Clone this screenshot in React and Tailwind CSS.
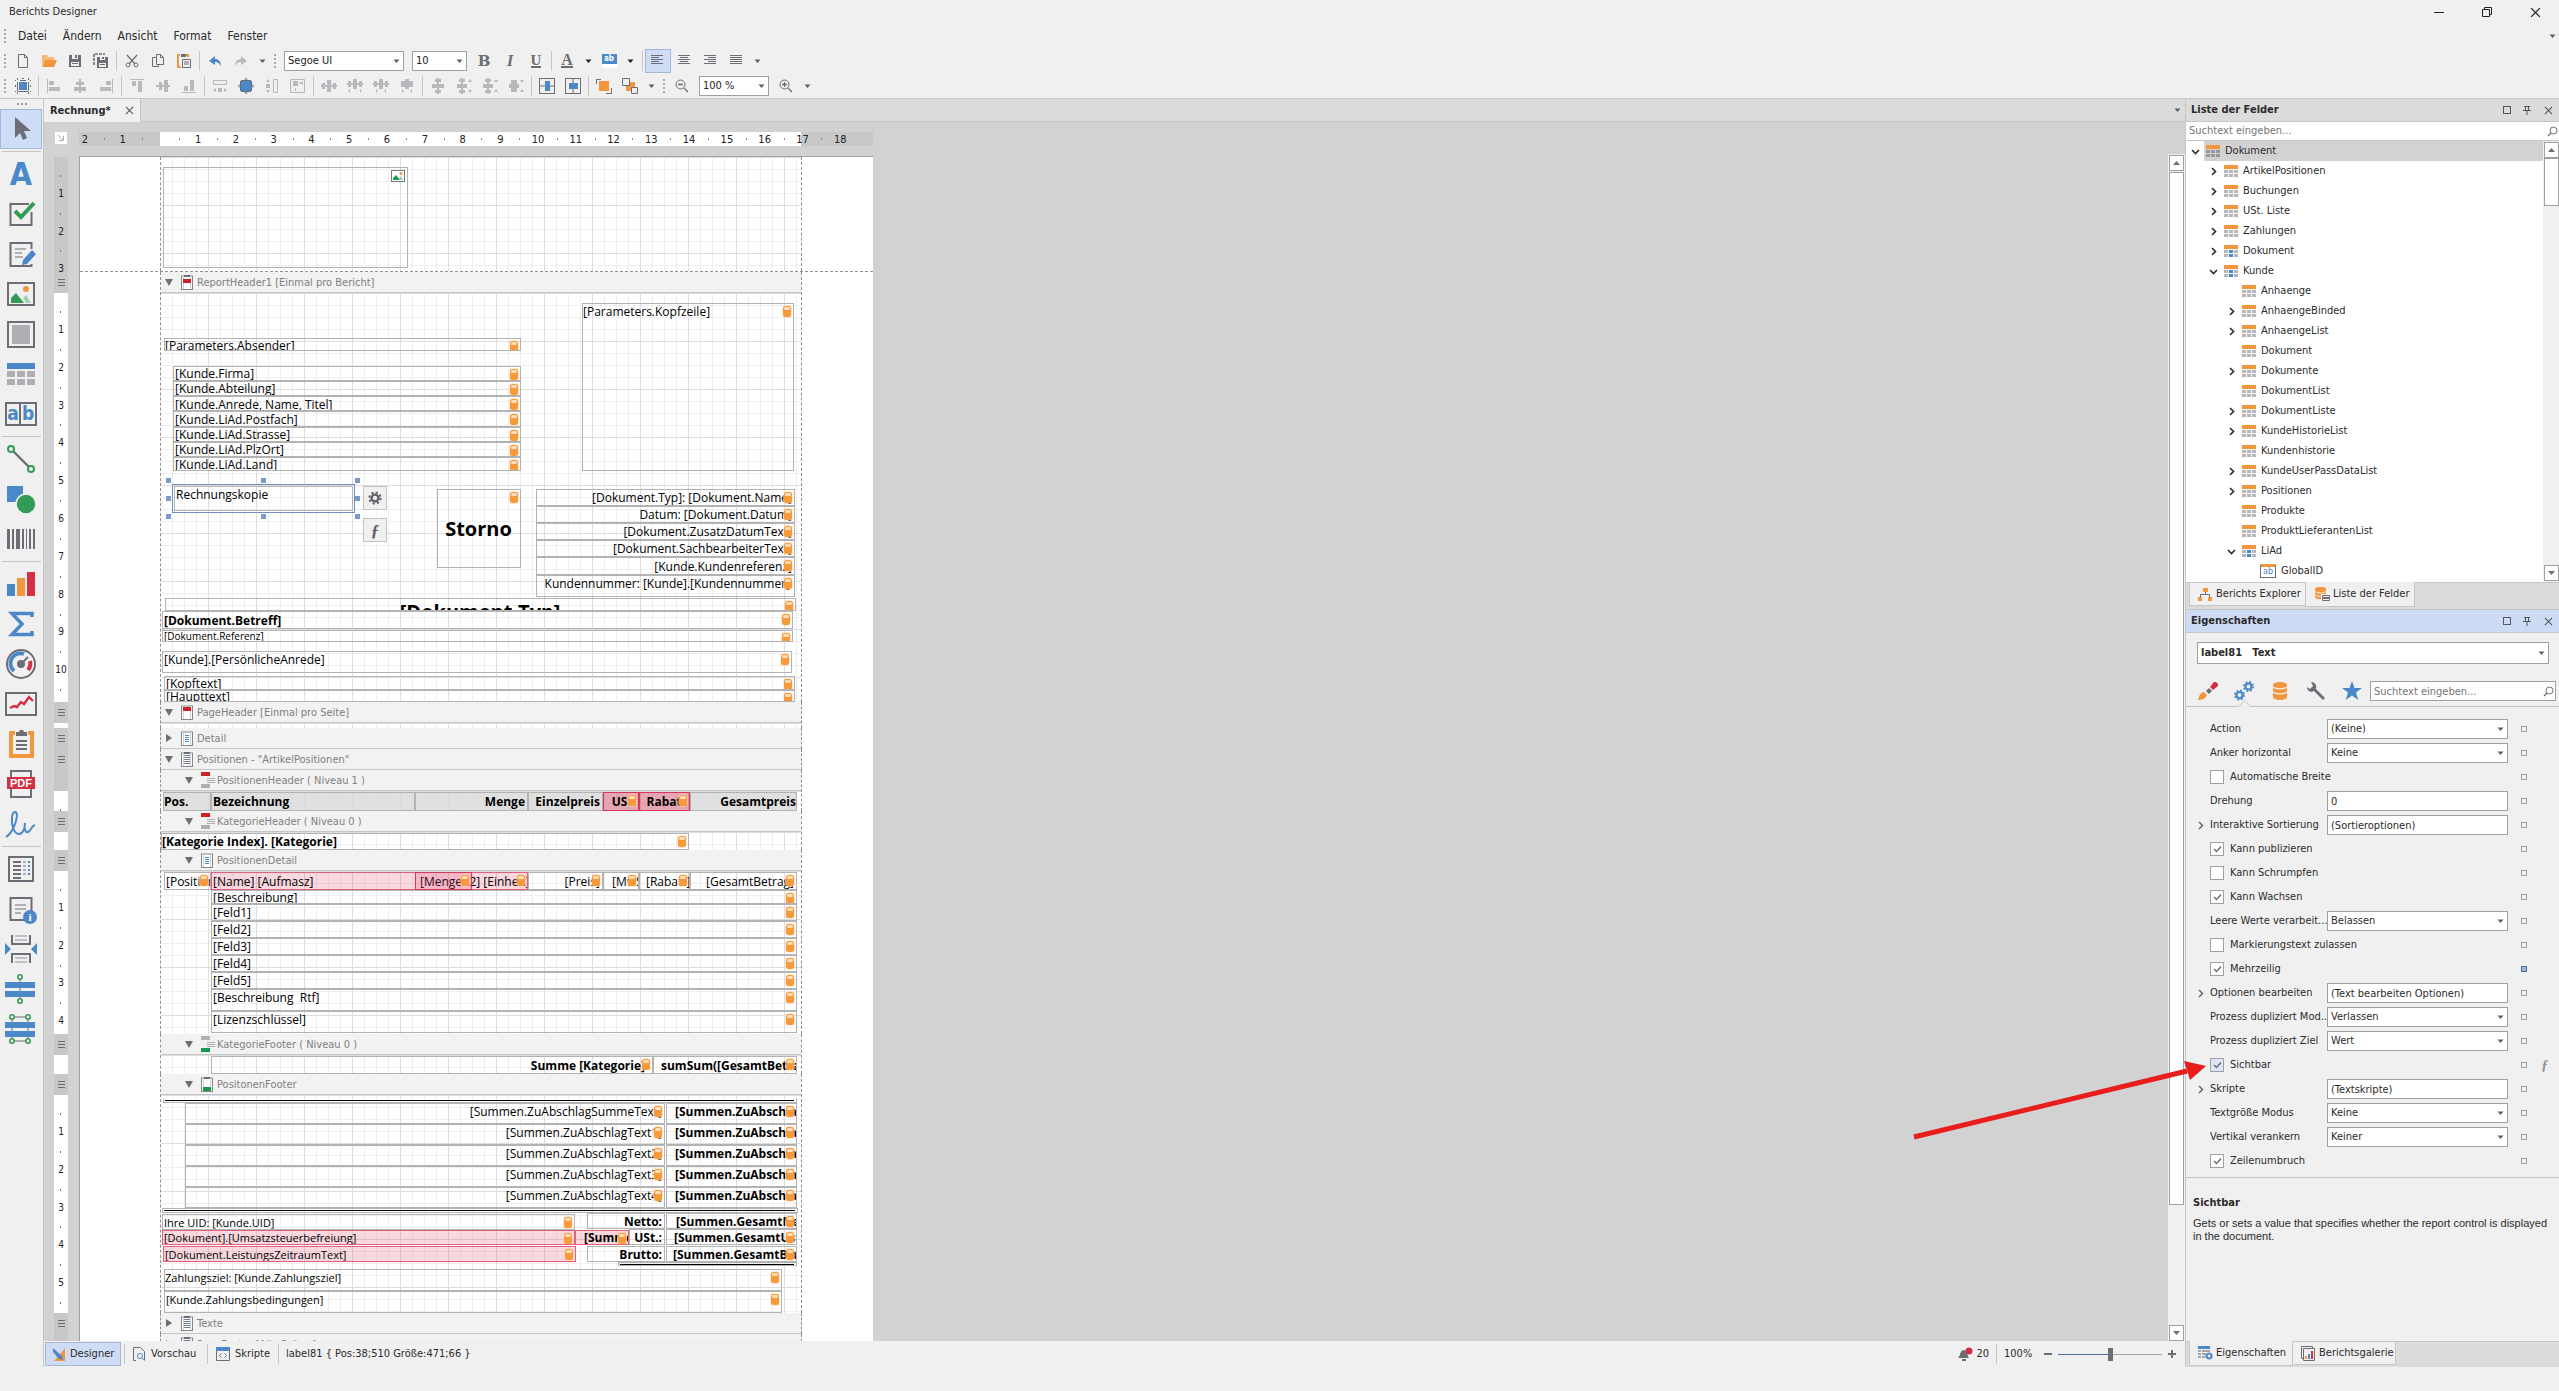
import { Fragment } from "react";

const CM = 37.8;
const GREY = "#6d6d75";
const MUTED = "#b9b9bd";
const BLUE = "#4a88c7";
const ORANGE = "#f3963e";
const GREEN = "#349b57";
const RED = "#d32f45";

// ---------- small shared pieces ----------

const Svg = ({ w = 16, h = 16, box, children, className = "" }) => (
    <svg width={w} height={h} viewBox={box || `0 0 ${w} ${h}`} fill="none" className={`shrink-0 ${className}`} aria-hidden="true">
        {children}
    </svg>
)

const Caret = ({ color = "#5f5f66" }) => (
    <Svg w={7} h={4}><path d="M0.5 0.5h6L3.5 4z" fill={color} /></Svg>
)

const Chevron = ({ open, color = "#2b2b2b" }) => (
    <Svg w={9} h={9}>
        <path d={open ? "M1 3l3.5 3.5L8 3" : "M3 1l3.5 3.5L3 8"} stroke={color} strokeWidth="1.6" />
    </Svg>
)

const Cross = ({ size = 9, color = "#55555b" }) => (
    <Svg w={size} h={size} box="0 0 10 10"><path d="M1 1l8 8M9 1L1 9" stroke={color} strokeWidth="1.2" /></Svg>
)

const Magnifier = () => (
    <Svg w={11} h={11}><circle cx="6.5" cy="4.5" r="3.5" stroke="#707078" /><path d="M4 7L1 10" stroke="#707078" strokeWidth="1.4" /></Svg>
)

const Grip = () => (
    <span className="flex w-[10px] shrink-0 flex-col items-center gap-[2px]">
        {[0, 1, 2, 3].map(i => <i key={i} className="size-[2px] bg-[#a9a9ad]" />)}
    </span>
)

const Sep = () => <span className="mx-[2px] h-5 w-px shrink-0 bg-[#c6c6c6]" />

const DbMark = () => (
    <Svg w={10} h={13} className="absolute top-px right-px">
        <rect x="0" y="0" width="10" height="13" rx="3" fill="#fdd9b5" fillOpacity="0.5" />
        <rect x="1" y="1" width="8" height="11" rx="2.5" fill="#f99a3a" />
        <rect x="2" y="2" width="6" height="3" rx="1.5" fill="#fde0c0" />
    </Svg>
)

const TableIcon = ({ blue, dark }) => (
    <Svg w={14} h={12}>
        <rect width="14" height="4" fill={ORANGE} />
        {[5, 9].map(y => [0, 5, 10].map(x => (
            <rect key={x + "-" + y} x={x} y={y} width="4" height="3" fill={blue && x === 5 ? BLUE : dark ? "#97979b" : "#b6b6ba"} />
        )))}
    </Svg>
)

const Select = ({ label, value, className = "", caret = "#5f5f66" }) => (
    <span className={`relative flex items-center ${className}`}>
        <select aria-label={label} defaultValue={value} className="h-full w-full appearance-none border border-[#a0a0a0] bg-white pr-4 pl-[3px] text-[#222]">
            <option>{value}</option>
        </select>
        <span className="pointer-events-none absolute right-1"><Caret color={caret} /></span>
    </span>
)

// ---------- toolbars ----------

const AlignIcon = ({ rows }) => (
    <Svg w={14} h={12}>
        {rows.map(([x, w], i) => <rect key={i} x={x} y={i * 2} width={w} height="1" fill={GREY} />)}
    </Svg>
)

const Bars = ({ d, extra, color = MUTED }) => (
    <Svg>
        <path d={d} fill={color} />
        {extra && <path d={extra} stroke={color} />}
    </Svg>
)

const fileTools = [
    ["Neu", <Svg><path d="M3.5 1.5h6l3 3v10h-9zM9.5 1.5v3h3" stroke={GREY} /></Svg>],
    ["Öffnen", <Svg><path d="M1 13V2h5l1 2h6v3H4z" fill="#f8b878" /><path d="M4 7h12l-3 7H1z" fill={ORANGE} /></Svg>],
    ["Speichern", <Svg><path d="M2 2h12v12H2z" fill={GREY} /><path d="M5 2h6v4H5zM4 9h8v4H4z" fill="#f0f0f0" /><path d="M8 2h2v3H8zM5 10h6v1H5z" fill={GREY} /></Svg>],
    ["Alle speichern", <Svg><path d="M1 12V1h11" stroke={GREY} strokeWidth="1.6" strokeDasharray="3 1" /><path d="M4 4h11v11H4z" fill={GREY} /><path d="M7 4h5v3H7zM6 10h7v4H6z" fill="#f0f0f0" /><path d="M9 4h2v2H9zM7 11h5v1H7z" fill={GREY} /></Svg>],
    null,
    ["Ausschneiden", <Svg><path d="M3 2l8 9M13 2L5 11" stroke={GREY} strokeWidth="1.3" /><circle cx="4" cy="12" r="2" stroke={GREY} /><circle cx="12" cy="12" r="2" stroke={GREY} /></Svg>],
    ["Kopieren", <Svg><path d="M6.5 1.5h4l3 3v7h-7z" stroke={GREY} /><path d="M6 4.5H2.500v9h6V12" stroke={GREY} /><path d="M10.500 1.500v3h3" stroke={GREY} /></Svg>],
    ["Einfügen", <Svg><path d="M5 14H2V2h2M10 2h2v2" stroke={ORANGE} strokeWidth="2" /><path d="M5 1h5v3H5z" fill={GREY} /><path d="M6.500 6.500h8v8h-8zM8 9h5M8 11h5" stroke={GREY} /></Svg>],
    null,
    ["Rückgängig", <Svg><path d="M2 8l6-5v3c4 0 6 3 6 7-2-3-3-4-6-4v3z" fill={BLUE} /></Svg>],
    ["Wiederholen", <Svg><path d="M14 8L8 3v3c-4 0-6 3-6 7 2-3 3-4 6-4v3z" fill={MUTED} /></Svg>],
]

const Lit = ({ children }) => (
    <Svg>
        <rect x="3" y="3" width="10" height="10" fill={BLUE} />
        {children}
    </Svg>
)

const layoutTools = [
    ["Am Raster ausrichten", <Svg><path d="M2.500 0v2M13.500 0v2M2.500 14v2M13.500 14v2M2.500 4v9M13.500 4v9M5 2.500h6M3 13.500h10M0 2.500h1M15 2.500h1M0 13.500h1M15 13.500h1" stroke={GREY} /><rect x="4" y="4" width="8" height="8" fill={BLUE} /><path d="M7 0h2v1H7zM0 7h1v2H0zM15 7h1v2h-1z" fill={GREY} /></Svg>],
    null,
    ["Links", <Bars d="M1 1h1v14H1zM3 3h5v4H3zM3 9h11v4H3z" />],
    ["Zentriert", <Bars d="M7 1h2v14H7zM4 4h8v3H4zM2 9h12v4H2z" />],
    ["Rechts", <Bars d="M14 1h1v14h-1zM8 3h5v4H8zM2 9h11v4H2z" />],
    null,
    ["Oben", <Bars d="M1 1h14v1H1zM3 3h4v5H3zM9 3h4v11H9z" />],
    ["Mitte", <Bars d="M1 7h14v2H1zM4 4h3v8H4zM9 2h4v12H9z" />],
    ["Unten", <Bars d="M1 14h14v1H1zM3 8h4v5H3zM9 2h4v11H9z" />],
    null,
    ["Gleiche Breite", <Bars d="M6 10h4v4H6zM1 12l3-2v4zM15 12l-3-2v4z" extra="M1.500 2.500h13v4h-13z" />],
    ["An Raster anpassen", <Lit><path d="M2.500 3v10M13.500 3v10M3 2.500h10M3 13.500h10" stroke={GREY} /><path d="M8 0l2 1.500H6zM8 16l2-1.500H6zM0 8l1.500-2v4zM16 8l-1.500-2v4z" fill={GREY} /></Lit>],
    ["Gleiche Höhe", <Bars d="M2 6h4v4H2zM4 1l2 3H2zM4 15l2-3H2z" extra="M9.500 1.500h4v13h-4z" />],
    ["Gleiche Größe", <Bars d="M3 3h5v5H3zM10 5l3-2v4zM5 10h1v3H5z" extra="M.5 1.500h14v13H.5zM9 5h3" />],
    null,
    ["Abstand h", <Bars d="M0 7h16v2H0zM1 5h3v6H1zM6 2h4v12H6zM12 5h3v6h-3z" />],
    ["Abstand h +", <Bars d="M0 5h16v2H0zM1 3h3v6H1zM6 1h4v10H6zM12 3h3v6h-3zM1 13l2-2v4zM15 13l-2-2v4z" />],
    ["Abstand h -", <Bars d="M0 5h16v2H0zM1 3h3v6H1zM6 1h4v10H6zM12 3h3v6h-3zM5 13l-2-2v4zM11 13l2-2v4z" />],
    ["Abstand h 0", <Bars d="M2 3h4v6H2zM6 1h4v10H6zM10 3h4v6h-4zM5 13l-2-2v4zM11 13l2-2v4z" />],
    null,
    ["Abstand v", <Bars d="M7 0h2v16H7zM5 1h6v3H5zM2 6h12v4H2zM5 12h6v3H5z" />],
    ["Abstand v +", <Bars d="M5 0h2v16H5zM3 1h6v3H3zM1 6h10v4H1zM3 12h6v3H3zM14 1l2 3h-4zM14 15l2-3h-4z" />],
    ["Abstand v -", <Bars d="M5 0h2v16H5zM3 1h6v3H3zM1 6h10v4H1zM3 12h6v3H3zM14 5l2-3h-4zM14 11l2 3h-4z" />],
    ["Abstand v 0", <Bars d="M3 2h6v4H3zM1 6h10v4H1zM3 10h6v4H3zM14 5l2-3h-4zM14 11l2 3h-4z" />],
    null,
    ["Horizontal zentrieren", <Svg><rect x="0.5" y="0.500" width="15" height="15" stroke={GREY} /><path d="M1 8h14" stroke={GREY} /><rect x="6" y="3" width="5" height="10" fill={BLUE} /></Svg>],
    ["Vertikal zentrieren", <Svg><rect x="0.5" y="0.500" width="15" height="15" stroke={GREY} /><path d="M8 1v14" stroke={GREY} /><rect x="4" y="5" width="9" height="6" fill={BLUE} /></Svg>],
    null,
    ["In den Vordergrund", <Svg><path d="M5 1.500H.5V6M10 15.500h5.500V10" stroke={GREY} /><rect x="3" y="3" width="10" height="10" fill={ORANGE} /></Svg>],
    ["In den Hintergrund", <Svg><rect x="4" y="4" width="9" height="9" fill={ORANGE} /><path d="M.5.5h7v7h-7zM9.500 9.500h6v6h-6z" stroke={GREY} fill="#f0f0f0" /></Svg>],
]

const ToolButton = ({ label, active, children }) => (
    <button aria-label={label} className={`flex h-6 w-[26px] shrink-0 items-center justify-center ${active ? "border border-[#a5b6d6] bg-[#cfdcf5]" : ""}`}>
        {children}
    </button>
)

const Tools = ({ items }) => items.map((t, i) => t
    ? <ToolButton key={i} label={t[0]}>{t[1]}</ToolButton>
    : <Sep key={i} />
)

const Drop = ({ color }) => (
    <button aria-label="Mehr" className="flex h-6 w-4 shrink-0 items-center justify-center"><Caret color={color} /></button>
)

const TopBars = () => (
    <header>
        <div className="flex h-6 items-center pl-[9px]">
            <h1>Berichts Designer</h1>
            <div className="ml-auto flex">
                <button aria-label="Minimieren" className="flex h-6 w-12 items-center justify-center"><Svg w={10} h={10}><path d="M0 5.500h10" stroke="#222" /></Svg></button>
                <button aria-label="Wiederherstellen" className="flex h-6 w-12 items-center justify-center"><Svg w={10} h={10}><path d="M.5 2.500h7v7h-7zM2.500 2V.5h7v7H8" stroke="#222" /></Svg></button>
                <button aria-label="Schließen" className="flex h-6 w-12 items-center justify-center"><Cross size={11} color="#222" /></button>
            </div>
        </div>
        <nav className="flex h-6 items-center text-[12px]">
            <Grip />
            {["Datei", "Ändern", "Ansicht", "Format", "Fenster"].map(m => (
                <button key={m} className="px-2">{m}</button>
            ))}
            <span className="mr-[3px] ml-auto"><Caret /></span>
        </nav>
        <div className="flex h-[25px] items-center">
            <Grip />
            <Tools items={fileTools} />
            <Drop />
            <Grip />
            <Select label="Schriftart" value="Segoe UI" className="ml-1 h-5 w-[120px]" />
            <Select label="Schriftgröße" value="10" className="mr-1 ml-2 h-5 w-[55px]" />
            <ToolButton label="Fett"><b className="font-['DejaVu_Serif','Liberation_Serif',serif] text-[15px] text-[#6d6d75]">B</b></ToolButton>
            <ToolButton label="Kursiv"><b className="font-['Liberation_Serif',serif] text-[17px] text-[#6d6d75] italic">I</b></ToolButton>
            <ToolButton label="Unterstrichen"><b className="border-b-2 border-[#6d6d75] font-['Liberation_Serif',serif] text-[15px] leading-3 text-[#6d6d75]">U</b></ToolButton>
            <Sep />
            <ToolButton label="Schriftfarbe"><b className="border-b-2 border-[#6d6d75] font-['Liberation_Serif',serif] text-[16px] leading-3 text-[#6d6d75]">A</b></ToolButton>
            <Drop color="#222" />
            <ToolButton label="Hintergrundfarbe">
                <span className="flex h-[14px] w-[15px] flex-col border-b-4 border-white bg-[#4a88c7] text-center text-[8px] leading-[10px] font-bold text-white">ab</span>
            </ToolButton>
            <Drop color="#222" />
            <span className="w-[2px]" />
            <Sep />
            <ToolButton label="Linksbündig" active><AlignIcon rows={[[0, 12], [0, 8], [0, 12], [0, 8], [0, 12]]} /></ToolButton>
            <ToolButton label="Zentriert"><AlignIcon rows={[[1, 12], [3, 8], [1, 12], [3, 8], [1, 12]]} /></ToolButton>
            <ToolButton label="Rechtsbündig"><AlignIcon rows={[[1, 12], [5, 8], [1, 12], [5, 8], [1, 12]]} /></ToolButton>
            <ToolButton label="Blocksatz"><AlignIcon rows={[[1, 12], [1, 12], [1, 12], [1, 12], [1, 12]]} /></ToolButton>
            <Drop />
        </div>
        <div className="flex h-[25px] items-center">
            <Grip />
            <Tools items={layoutTools} />
            <Drop />
            <Grip />
            <ToolButton label="Verkleinern"><Svg w={14} h={14}><circle cx="5.500" cy="5.500" r="4.500" stroke={GREY} /><path d="M3 5.500h5M9 9l4 4" stroke={GREY} strokeWidth="1.3" /></Svg></ToolButton>
            <Select label="Zoom" value="100 %" className="mx-1 h-5 w-[70px]" />
            <ToolButton label="Vergrößern"><Svg w={14} h={14}><circle cx="5.500" cy="5.500" r="4.500" stroke={GREY} /><path d="M3 5.500h5M5.500 3v5M9 9l4 4" stroke={GREY} strokeWidth="1.3" /></Svg></ToolButton>
            <Drop />
        </div>
    </header>
)

// ---------- toolbox ----------

const Big = ({ children }) => <Svg w={32} h={32}>{children}</Svg>
const page = "M5.500 5h21v22h-21z"

const toolbox = [
    ["Zeiger", <Big><path d="M10 4v21l5-5 3 7 4-2-3-7h7z" fill={GREY} /></Big>],
    null,
    ["Beschriftung", <b className="text-[32px] leading-none text-[#4a88c7]">A</b>],
    ["Kontrollkästchen", <Big><path d="M24 6H5.500v21h21V14" stroke={GREY} strokeWidth="2" /><path d="M10 13l6 6L29 5" stroke={GREEN} strokeWidth="4" /></Big>],
    ["Rich-Text", <Big><path d="M26.500 11V5h-21v23h21v-2" stroke={GREY} strokeWidth="2" /><path d="M10 11h11M10 15h7M10 19h8" stroke="#b0b0b4" strokeWidth="2" /><path d="M17 27l1-5 9-10 4 4-9 10z" fill={BLUE} /></Big>],
    ["Bild", <Big><rect x="3" y="5" width="26" height="22" stroke={GREY} strokeWidth="2" /><path d="M6 25v-5l5-5 8 10z" fill={GREEN} /><path d="M18 20l3-3 5 8h-5z" fill="#a5d0b4" /><circle cx="21" cy="11" r="3" fill={ORANGE} /></Big>],
    ["Panel", <Big><rect x="3" y="4" width="26" height="25" stroke={GREY} strokeWidth="2" /><rect x="7" y="7" width="18" height="19" fill="#aeaeb3" /></Big>],
    ["Tabelle", <Big><path d="M2 5h28v6H2z" fill={BLUE} />{[13, 21].map(y => [2, 12, 22].map(x => <rect key={x + "." + y} x={x} y={y} width="8" height="6" fill="#aeaeb3" />))}</Big>],
    ["Zeichenkamm", <span className="flex h-6 w-8 border-2 border-[#6d6d75] text-[19px] leading-[19px] font-bold text-[#4a88c7]"><i className="w-1/2 border-r-2 border-[#6d6d75] text-center not-italic">a</i><i className="w-1/2 text-center not-italic">b</i></span>],
    null,
    ["Linie", <Big><path d="M6 6l20 20" stroke={GREY} strokeWidth="2.400" /><circle cx="6" cy="6" r="3" fill="#f0f0f0" stroke={GREEN} strokeWidth="2" /><circle cx="26" cy="26" r="3" fill="#f0f0f0" stroke={GREEN} strokeWidth="2" /></Big>],
    ["Form", <Big><rect x="2" y="3" width="16" height="16" fill={BLUE} /><circle cx="21" cy="21" r="10" fill={GREEN} stroke="#f0f0f0" strokeWidth="1.500" /></Big>],
    ["Barcode", <Big><path d="M2 6h3v20H2zM7 6h2v20H7zM11 6h4v20h-4zM17 6h2v20h-2zM21 6h1v20h-1zM24 6h2v20h-2zM28 6h2v20h-2z" fill={GREY} /></Big>],
    null,
    ["Diagramm", <Big><rect x="2" y="16" width="8" height="12" fill={BLUE} /><rect x="12" y="10" width="8" height="18" fill={ORANGE} /><rect x="22" y="4" width="8" height="24" fill={RED} /></Big>],
    ["Summe", <Big><path d="M27 9V5.500H7L17 16 7 26.500h20V23" stroke={BLUE} strokeWidth="3.500" /></Big>],
    ["Messgerät", <Big><circle cx="16" cy="16" r="14" stroke={GREY} strokeWidth="2" /><path d="M9 23a10 10 0 0 1 10-17" stroke={BLUE} strokeWidth="4" /><path d="M25 13a10 10 0 0 1-2 9" stroke={RED} strokeWidth="4" /><circle cx="16" cy="16" r="4" fill={GREY} /><path d="M16 16l7-7" stroke={GREY} strokeWidth="2" /></Big>],
    ["Sparkline", <Big><rect x="1" y="5" width="30" height="22" stroke={GREY} strokeWidth="2" /><path d="M5 20l4-2 3 1 4-5 3 2 5-7 4 4" stroke={RED} strokeWidth="2.400" /></Big>],
    ["Unterbericht", <Big><path d="M10 5H6v23h21V5h-4" stroke={ORANGE} strokeWidth="4" /><path d="M11 8V4h3l1-2h3l1 2h3v4zM11 12h11v2H11zM11 16h11v2H11zM11 20h11v2H11z" fill={GREY} /></Big>],
    ["PDF", <Big><path d="M6 3h20v26H6z" stroke={GREY} strokeWidth="2" /><rect x="2" y="9" width="28" height="12" fill={RED} /><text x="16" y="19" textAnchor="middle" fontSize="11" fontWeight="bold" fill="#fff" fontFamily="Liberation Sans">PDF</text></Big>],
    ["Signatur", <Big><path d="M1 29c5-3 10-12 11-21 0-5-4-6-5 1-1 8 2 17 7 17 4 0 6-6 6-11-1 5 0 10 3 9s3-6 7-7" stroke={BLUE} strokeWidth="2" /></Big>],
    null,
    ["Inhaltsverzeichnis", <Big><path d="M4 4h24v24H4z" stroke={GREY} strokeWidth="2" /><path d="M8 9h8M8 13h8M8 17h8M8 21h8M8 25h8" stroke={GREY} strokeWidth="2" /><path d="M18 9h3M18 13h3M18 17h3M18 21h3" stroke="#b0b0b4" strokeWidth="2" /><path d="M23 9h2M23 13h2M23 17h2M23 21h2" stroke={BLUE} strokeWidth="2" /></Big>],
    ["Seiteninfo", <Big><path d={page} stroke={GREY} strokeWidth="2" /><path d="M10 12h11M10 16h11M10 20h6" stroke="#b0b0b4" strokeWidth="2" /><circle cx="25" cy="24" r="7" fill={BLUE} /><text x="25" y="28" textAnchor="middle" fontSize="11" fontWeight="bold" fill="#fff" fontFamily="Liberation Serif">i</text></Big>],
    ["Seitenumbruch", <Big><path d="M7 2v9h18V2M7 30v-9h18v9" stroke={GREY} strokeWidth="2" /><path d="M10 3h12M10 7h12M10 25h12M10 29h12" stroke="#b0b0b4" strokeWidth="1.500" /><path d="M0 10l6 6-6 6zM32 10l-6 6 6 6z" fill={BLUE} /></Big>],
    ["Bandlinie", <Big><path d="M15 4v24" stroke={GREY} /><path d="M0 9h30v6H0zM0 18h30v6H0z" fill={BLUE} /><circle cx="15" cy="4" r="2.200" fill="#f0f0f0" stroke={GREEN} strokeWidth="1.600" /><circle cx="15" cy="28" r="2.200" fill="#f0f0f0" stroke={GREEN} strokeWidth="1.600" /></Big>],
    ["Bandfeld", <Big><path d="M7 4h16v24H7z" stroke={GREY} /><path d="M0 9h30v6H0zM0 18h30v6H0z" fill={BLUE} />{[[7, 4], [23, 4], [7, 28], [23, 28]].map(([x, y]) => <circle key={x + "." + y} cx={x} cy={y} r="2.200" fill="#f0f0f0" stroke={GREEN} strokeWidth="1.600" />)}</Big>],
]

const Toolbox = () => (
    <aside className="flex w-11 shrink-0 flex-col border-r border-[#c6c6c6]">
        <span className="flex h-[10px] shrink-0 items-center justify-center gap-[2px]">
            {[0, 1, 2].map(i => <i key={i} className="size-[2px] bg-[#98989c]" />)}
        </span>
        {toolbox.map((t, i) => t
            ? <button key={i} aria-label={t[0]} className={`flex h-10 w-[42px] shrink-0 items-center justify-center ${i === 0 ? "border border-[#a5b6d6] bg-[#cfdcf5]" : ""}`}>{t[1]}</button>
            : <span key={i} className="mx-[2px] my-[2px] h-px shrink-0 bg-[#c6c6c6]" />
        )}
    </aside>
)

// ---------- report bands ----------

const T = (x, y, w, h, text, o = {}) => ({ x, y, w, h, text, db: true, ...o })

const bold = { cls: "font-bold" }
const right = { cls: "justify-end" }
const head = "bg-[#d8d8d8]/80 font-bold"
const pinkCell = "border-[#e2607e] bg-[#e03a62]/20"

const reportHeader = [
    T(421, 10, 212, 168, "[Parameters.Kopfzeile]", { cls: "items-start!", flush: true }),
    T(3, 45, 357, 13, "[Parameters.Absender]", { flush: true, low: true }),
    T(12, 73, 348, 15, "[Kunde.Firma]"),
    T(12, 88, 348, 15, "[Kunde.Abteilung]"),
    T(12, 103, 348, 15, "[Kunde.Anrede, Name, Titel]", { low: true }),
    T(12, 118, 348, 16, "[Kunde.LiAd.Postfach]"),
    T(12, 134, 348, 15, "[Kunde.LiAd.Strasse]"),
    T(12, 149, 348, 15, "[Kunde.LiAd.PlzOrt]"),
    T(12, 164, 348, 14, "[Kunde.LiAd.Land]", { low: true }),
    T(276, 196, 84, 79, "Storno", { cls: "justify-center text-[20px] font-bold" }),
    T(375, 196, 259, 17, "[Dokument.Typ]: [Dokument.Name]", right),
    T(375, 213, 259, 17, "Datum: [Dokument.Datum]", right),
    T(375, 230, 259, 17, "[Dokument.ZusatzDatumText]", right),
    T(375, 247, 259, 17, "[Dokument.SachbearbeiterText]", right),
    T(375, 264, 259, 18, "[Kunde.Kundenreferenz]", right),
    T(375, 282, 259, 22, "Kundennummer: [Kunde].[Kundennummer]", { cls: "justify-end items-start!", padR: 4 }),
    T(4, 305, 631, 13, "[Dokument.Typ]", { cls: "items-start! justify-center text-[20px] font-bold leading-[26px]" }),
    T(1, 318, 631, 18, "[Dokument.Betreff]", bold),
    T(1, 337, 631, 12, "[Dokument.Referenz]", { cls: "text-[10px]" }),
    T(1, 358, 630, 22, "[Kunde].[PersönlicheAnrede]", { cls: "items-start!" }),
    T(3, 383, 631, 14, "[Kopftext]", { low: true }),
    T(3, 397, 631, 12, "[Haupttext]", { low: true }),
]

const positionHeader = [
    T(2, 1, 48, 19, "Pos.", { cls: head, db: false, flush: true }),
    T(50, 1, 204, 19, "Bezeichnung", { cls: head, db: false }),
    T(254, 1, 113, 19, "Menge", { cls: head + " justify-end", db: false }),
    T(367, 1, 75, 19, "Einzelpreis", { cls: head + " justify-end", db: false }),
    T(442, 1, 36, 19, "USt.", { cls: "justify-end border-[#d9365c] bg-[#c83c5c]/45 font-bold" }),
    T(478, 1, 51, 19, "Rabatt", { cls: "justify-end border-[#d9365c] bg-[#c83c5c]/45 font-bold" }),
    T(529, 1, 107, 19, "Gesamtpreis", { cls: head + " justify-end", db: false, flush: true }),
]

const positionDetail = [
    T(3, 1, 47, 18, "[Position]"),
    T(50, 1, 317, 18, "[Name] [Aufmasz]", { cls: pinkCell }),
    T(254, 1, 113, 18, "[Mengen2] [Einheit]", { cls: "border-transparent", pad: 4 }),
    T(254, 1, 57, 18, "", { cls: "border-[#d9365c] bg-[#e03a62]/20" }),
    T(367, 1, 75, 18, "[Preis]", right),
    T(442, 1, 36, 18, "[MwSt]", { pad: 8 }),
    T(478, 1, 51, 18, "[Rabatt]", { pad: 6 }),
    T(529, 1, 107, 18, "[GesamtBetrag]", right),
    T(50, 19, 586, 14, "[Beschreibung]"),
    ...[1, 2, 3, 4, 5].map(n => T(50, 16 + n * 17, 586, 17, `[Feld${n}]`)),
    T(50, 118, 586, 22, "[Beschreibung  Rtf]", { cls: "items-start!" }),
    T(50, 140, 586, 22, "[Lizenzschlüssel]", { cls: "items-start!" }),
]

const positionFooter = [
    T(2, 4, 634, 4, "", { cls: "border-t-0", rule: true, db: false }),
    ...["SummeText", "Text1]", "Text2]", "Text3]", "Text4]"].flatMap((s, i) => [
        T(24, 8 + i * 21, 480, 21, "[Summen.ZuAbschlag" + s + (i ? "" : "]"), { cls: "justify-end items-start!" }),
        T(505, 8 + i * 21, 131, 21, "[Summen.ZuAbschlag]", { cls: "items-start! font-bold", pad: 8 }),
    ]),
    T(1, 113, 636, 5, "", { rule: true, db: false }),
    T(1, 119, 413, 16, "Ihre UID: [Kunde.UID]", { cls: "text-[11px]" }),
    T(426, 118, 78, 16, "Netto:", { cls: "justify-end font-bold", db: false }),
    T(505, 118, 131, 16, "[Summen.GesamtNetto]", { cls: "font-bold", pad: 9, low: true }),
    T(468, 134, 36, 16, "USt.:", { cls: "justify-end font-bold", db: false }),
    T(505, 134, 131, 16, "[Summen.GesamtUst]", { cls: "font-bold", pad: 7, low: true }),
    T(1, 135, 413, 15, "[Dokument].[Umsatzsteuerbefreiung]", { cls: pinkCell + " text-[11px]" }),
    T(414, 135, 54, 15, "[Summen]", { cls: pinkCell + " font-bold", pad: 8 }),
    T(2, 151, 413, 16, "[Dokument.LeistungsZeitraumText]", { cls: pinkCell + " text-[11px]" }),
    T(426, 151, 78, 16, "Brutto:", { cls: "justify-end font-bold", db: false }),
    T(505, 151, 131, 16, "[Summen.GesamtBrutto]", { cls: "font-bold", pad: 6, low: true }),
    T(457, 167, 179, 4, "", { rule: true, db: false }),
    T(3, 174, 618, 22, "Zahlungsziel: [Kunde.Zahlungsziel]", { cls: "items-start! text-[11px]", flush: true }),
    T(3, 196, 618, 22, "[Kunde.Zahlungsbedingungen]", { cls: "items-start! text-[11px]" }),
]

const BandIcon = ({ kind }) => {
    if (kind === "groupHeader" || kind === "groupFooter") {
        const top = kind === "groupHeader"
        return (
            <Svg w={14} h={16}>
                <rect x="0" y="0" width="9" height="4" fill={top ? "#cf2027" : "#b0b0b0"} />
                <rect x="0" y="12" width="9" height="4" fill={top ? "#b0b0b0" : "#149a4c"} />
                <path d="M6 6.500h8M6 8.500h8M6 10.500h8" stroke="#b0b0b0" />
            </Svg>
        )
    }
    return (
        <Svg w={12} h={16}>
            <rect x="0.5" y="2" width="11" height="13.500" fill="#fff" stroke="#85858a" />
            <path d="M2.500 2v13M9.500 2v13" stroke="#d0d0d0" />
            {kind === "reportHeader" && <path d="M2 5h8v4H2z" fill="#cf2027" />}
            {kind === "pageHeader" && <path d="M2 3h8v4H2z" fill="#cf2027" />}
            {kind === "reportFooter" && <path d="M2 11h8v4H2z" fill="#149a4c" />}
            {kind === "detail" && <path d="M4 5.500h4M4 7.500h4M4 9.500h4M4 11.500h4" stroke={BLUE} />}
            {kind === "report" && <path d="M3 4.500h6M3 6.500h6M3 8.500h6M3 10.500h6M3 12.500h6" stroke="#6f7f95" />}
            {(kind === "reportHeader" || kind === "reportFooter" || kind === "report") && <path d="M3 3V1h6v2z" fill={GREY} />}
        </Svg>
    )
}

const bands = [
    { kind: "margin", height: 115, top: true },
    { title: "ReportHeader1 [Einmal pro Bericht]", kind: "reportHeader", height: 409, items: reportHeader, selected: true },
    { title: "PageHeader [Einmal pro Seite]", kind: "pageHeader", height: 5 },
    { title: "Detail", kind: "detail", closed: true, height: 0 },
    { title: 'Positionen - "ArtikelPositionen"', kind: "report", height: 0 },
    { title: "PositionenHeader ( Niveau 1 )", kind: "groupHeader", depth: 1, height: 20, items: positionHeader, quiet: true },
    { title: "KategorieHeader ( Niveau 0 )", kind: "groupHeader", depth: 1, height: 18, items: [T(0, 1, 528, 17, "[Kategorie Index]. [Kategorie]", { cls: "font-bold", flush: true })] },
    { title: "PositionenDetail", kind: "detail", depth: 1, height: 163, items: positionDetail },
    {
        title: "KategorieFooter ( Niveau 0 )", kind: "groupFooter", depth: 1, height: 19, items: [
            T(50, 1, 442, 18, "Summe [Kategorie]", { cls: "justify-end font-bold", padR: 7 }),
            T(492, 1, 144, 18, "sumSum([GesamtBetrag])", { cls: "font-bold", pad: 7 }),
        ]
    },
    { title: "PositonenFooter", kind: "reportFooter", depth: 1, height: 218, items: positionFooter },
    { title: "Texte", kind: "report", closed: true, height: 0 },
    { title: "PageFooter [Alle Seiten]", kind: "report", closed: true, height: 0 },
]

const Control = ({ c }) => (
    <div
        className={`absolute flex items-center overflow-hidden border border-[#b3b3b3] whitespace-pre ${c.cls || ""}`}
        style={{ left: c.x, top: c.y, width: c.w, height: c.h, paddingLeft: c.pad ?? (c.flush ? 0 : 1), paddingRight: c.padR ?? (c.flush ? 0 : 2) }}
    >
        {c.rule
            ? <span className="h-px w-full bg-black" />
            : <span className={`shrink-0 ${c.low ? "pt-px" : ""}`}>{c.text}</span>}
        {c.db && <DbMark />}
    </div>
)

const Handles = () => [7, 102, 196].flatMap(x => [187, 205, 223].map(y => (
    x === 102 && y === 205 ? null :
        <i key={x + "-" + y} className="absolute size-[5px] bg-[#7d9bc8]" style={{ left: x - 2, top: y - 2 }} />
)))

const Selected = () => (
    <>
        <div className="absolute top-[191px] left-[11px] h-[29px] w-[183px] border border-[#6f8fc2] p-px">
            <div className="h-full border border-[#b3b3b3] pl-px">Rechnungskopie</div>
        </div>
        <Handles />
        <button aria-label="Aufgaben" className="absolute top-[193px] left-[202px] flex size-6 items-center justify-center border border-[#c3c3c3] bg-[#f0f0f0]">
            <Svg w={14} h={14}>
                <circle cx="7" cy="7" r="3.400" stroke="#606066" strokeWidth="2.400" />
                <circle cx="7" cy="7" r="5.600" stroke="#606066" strokeWidth="2" strokeDasharray="2.200 2.200" />
            </Svg>
        </button>
        <button aria-label="Ausdruck" className="absolute top-[225px] left-[202px] flex size-6 items-center justify-center border border-[#c3c3c3] bg-[#f0f0f0] font-['Liberation_Serif',serif] text-[17px] font-bold text-[#606066] italic">ƒ</button>
    </>
)

const BandTitle = ({ b }) => (
    <div className={`flex h-[21px] items-center border-b border-[#c4c4c4] bg-[#f2f2f2] text-[11px] text-[#808080] ${b.depth ? "pl-6" : "pl-1"}`}>
        <Svg w={8} h={8} className="mr-2"><path d={b.closed ? "M1 0v8l6-4z" : "M0 1h8L4 8z"} fill="#6f6f73" /></Svg>
        <span className="flex w-4"><BandIcon kind={b.kind} /></span>
        <span>{b.title}</span>
    </div>
)

const Report = () => (
    <div className="h-full w-[794px] shrink-0 overflow-hidden border-t border-l border-[#a0a0a0] bg-white font-['Open_Sans','Noto_Sans',sans-serif] text-[12px] leading-[15px] text-black">
        {bands.map((b, i) => (
            <div key={i} className={b.top ? "border-b border-dashed border-[#909090]" : ""}>
                <section className="ml-20 w-[642px] border-x border-dashed border-[#909090]">
                    {b.title && <div className="font-['DejaVu_Sans_Condensed','DejaVu_Sans',sans-serif]"><BandTitle b={b} /></div>}
                    <div
                        className="relative bg-[image:linear-gradient(to_left,#dedede_1px,transparent_1px),linear-gradient(to_top,#dedede_1px,transparent_1px),linear-gradient(to_left,#efefef_1px,transparent_1px),linear-gradient(to_top,#efefef_1px,transparent_1px)] bg-[size:48px_48px,48px_48px,12px_12px,12px_12px] bg-[position:0_1px]"
                        style={{ height: b.top ? b.height - 1 : b.height }}
                    >
                        {b.top && (
                            <div className="absolute top-[10px] left-[2px] h-[101px] w-[245px] border border-[#b3b3b3]">
                                <Svg w={14} h={12} className="absolute top-[2px] right-[2px]">
                                    <rect x="0.5" y="0.500" width="13" height="11" fill="#fff" stroke="#77777c" />
                                    <path d="M2 10V8l3-3 4 5z" fill="#1d9b4b" /><circle cx="10" cy="3.500" r="1.500" fill={ORANGE} /><path d="M8 8l2-2 2 4h-3z" fill="#9fd0b0" />
                                </Svg>
                            </div>
                        )}
                        {b.items?.map((c, j) => <Control key={j} c={c} />)}
                        {b.selected && <Selected />}
                    </div>
                </section>
            </div>
        ))}
    </div>
)

const Menu3 = () => <Svg w={7} h={7}><path d="M0 .5h7M0 3.500h7M0 6.500h7" stroke="#6f6f73" /></Svg>

const SideRuler = () => (
    <div className="mr-[11px] ml-[10px] w-[14px] shrink-0 overflow-hidden pt-px text-[10px] leading-none text-[#222]">
        {bands.map((b, i) => {
            const cells = Math.max(0, Math.ceil((b.height - 19) / CM))
            return (
                <Fragment key={i}>
                    {b.title && <div className="flex h-[21px] items-center justify-center bg-[#c8c8c8]">{!b.quiet && <Menu3 />}</div>}
                    <div className={`overflow-hidden ${b.top ? "bg-[#c8c8c8]" : "bg-white"}`} style={{ height: b.height }}>
                        <div className="mt-[18px] flex flex-col" style={{ height: Math.round(cells * CM) }}>
                            {Array.from({ length: cells }, (_, n) => (
                                <div key={n} className="relative flex flex-1 items-center justify-center">
                                    <i className="absolute top-0 left-[6px] h-[2px] w-px bg-[#77777c]" />
                                    {(n + 1) * CM < b.height && n + 1}
                                </div>
                            ))}
                        </div>
                    </div>
                </Fragment>
            )
        })}
    </div>
)

const TopRuler = () => (
    <div className="flex h-8 shrink-0 items-start pt-[10px]">
        <button aria-label="Ursprung" className="mr-3 ml-[11px] flex h-3 w-3 items-center justify-center bg-white">
            <Svg w={6} h={6}><path d="M0 0l5 5M5.500 1v4.500H1" stroke="#b0b0b0" /></Svg>
        </button>
        <div className="relative flex h-[14px] w-[794px] overflow-hidden text-[11px] leading-none text-[#222]">
            <span className="w-[81px] bg-[#c8c8c8]" />
            <span className="w-[641px] bg-white" />
            <span className="flex-1 bg-[#c8c8c8]" />
            <div className="absolute inset-y-0 -left-[13px] flex w-[793px]">
                {Array.from({ length: 21 }, (_, i) => (
                    <span key={i} className="relative flex flex-1 items-center justify-center">
                        <i className="absolute top-[6px] left-0 h-[2px] w-px bg-[#8a8a8e]" />
                        {i === 2 ? "" : Math.abs(i - 2)}
                    </span>
                ))}
            </div>
        </div>
    </div>
)

const ScrollArrow = ({ down }) => (
    <button aria-label={down ? "Nach unten" : "Nach oben"} className="flex h-4 w-[15px] shrink-0 items-center justify-center border border-[#a0a0a0] bg-white">
        <Svg w={7} h={4}><path d={down ? "M0 0h7L3.500 4z" : "M0 4h7L3.500 0z"} fill={GREY} /></Svg>
    </button>
)

// ---------- center ----------

const StatusBar = () => (
    <footer className="flex h-[26px] shrink-0 items-center bg-[#f0f0f0]">
        <button className="ml-px flex h-6 w-[76px] items-center gap-1 border border-[#a5b6d6] bg-[#cfdcf5] pl-[6px]">
            <Svg w={14} h={14}><path d="M13 1v13H2z" fill={ORANGE} /><path d="M1 1l9 8 1 4-4-1L1 5z" fill={BLUE} /></Svg>
            Designer
        </button>
        <span className="mx-[3px] h-5 w-px bg-[#c6c6c6]" />
        <button className="flex w-[76px] items-center gap-[5px] pl-[5px]">
            <Svg w={13} h={14}><path d="M3 13.500H.5V.5h7l4 4v9" stroke={GREY} /><circle cx="7" cy="9" r="2.500" stroke={BLUE} /><path d="M9 11l2 2" stroke={BLUE} /></Svg>
            Vorschau
        </button>
        <span className="mx-[3px] h-5 w-px bg-[#c6c6c6]" />
        <button className="flex w-16 items-center gap-[5px] pl-[5px]">
            <Svg w={14} h={14}><path d="M.5 3.500v10h13v-10" stroke={GREY} /><path d="M0 0h14v4H0z" fill={BLUE} /><path d="M5.500 6.500l-2 2 2 2M8.500 6.500l2 2-2 2" stroke={GREY} /></Svg>
            Skripte
        </button>
        <span className="mr-[7px] ml-[3px] h-5 w-px bg-[#c6c6c6]" />
        <span>label81 {"{"} Pos:38;510 Größe:471;66 {"}"}</span>
        <div className="mr-[9px] ml-auto flex items-center">
            <Svg w={15} h={14} className="mr-[3px]"><path d="M0 11c3-2 1-7 6-8 4 1 3 6 5 8zM4 12h4v2H4z" fill={GREY} /><circle cx="11" cy="4" r="3.500" fill={RED} /></Svg>
            <span>20</span>
            <span className="mx-[7px] h-5 w-px bg-[#c6c6c6]" />
            <span className="w-10">100%</span>
            <button aria-label="Kleiner" className="mr-[6px] h-[2px] w-2 bg-[#6d6d75]" />
            <input
                type="range" aria-label="Zoom" defaultValue="50"
                className="h-4 w-[104px] appearance-none bg-[linear-gradient(to_right,#4a6fa5_50%,#a8a8ac_50%)] bg-[size:100%_1px] bg-center bg-no-repeat [&::-webkit-slider-thumb]:h-[13px] [&::-webkit-slider-thumb]:w-[5px] [&::-webkit-slider-thumb]:appearance-none [&::-webkit-slider-thumb]:bg-[#6d6d75]"
            />
            <button aria-label="Größer" className="ml-[6px] flex"><Svg w={8} h={8}><path d="M0 4h8M4 0v8" stroke={GREY} strokeWidth="2" /></Svg></button>
        </div>
    </footer>
)

const Center = () => (
    <main className="flex min-w-0 flex-1 flex-col">
        <div className="flex h-[23px] shrink-0 border-b border-[#c6c6c6] bg-[#dcdcdc]">
            <div className="flex h-[23px] w-[97px] items-center border-r border-[#c6c6c6] bg-[#f0f0f0] pl-[6px] text-[11px] font-bold">
                Rechnung*
                <button aria-label="Tab schließen" className="mr-[6px] ml-auto flex"><Cross /></button>
            </div>
            <button aria-label="Tabs" className="mr-1 ml-auto flex items-center"><Caret /></button>
        </div>
        <div className="flex min-h-0 flex-1 flex-col bg-[#d2d2d2]">
            <TopRuler />
            <div className="flex min-h-0 flex-1">
                <div className="flex min-w-0 flex-1 overflow-hidden pt-[2px]">
                    <SideRuler />
                    <Report />
                </div>
                <div className="flex w-[17px] flex-col bg-[#f0f0f0] pt-px pl-px">
                    <ScrollArrow />
                    <div className="mt-px mb-[120px] w-[15px] flex-1 border border-[#a0a0a0] bg-white" />
                    <ScrollArrow down />
                </div>
            </div>
        </div>
        <StatusBar />
    </main>
)

// ---------- right panels ----------

const tree = [
    [0, "Dokument", "open", "dark"],
    [1, "ArtikelPositionen", "closed"],
    [1, "Buchungen", "closed"],
    [1, "USt. Liste", "closed"],
    [1, "Zahlungen", "closed"],
    [1, "Dokument", "closed", "blue"],
    [1, "Kunde", "open", "blue"],
    [2, "Anhaenge"],
    [2, "AnhaengeBinded", "closed"],
    [2, "AnhaengeList", "closed"],
    [2, "Dokument"],
    [2, "Dokumente", "closed"],
    [2, "DokumentList"],
    [2, "DokumentListe", "closed"],
    [2, "KundeHistorieList", "closed"],
    [2, "Kundenhistorie"],
    [2, "KundeUserPassDataList", "closed"],
    [2, "Positionen", "closed"],
    [2, "Produkte"],
    [2, "ProduktLieferantenList"],
    [2, "LiAd", "open", "blue"],
    [3, "GlobalID", null, "field"],
]

const PanelTitle = ({ children, active }) => (
    <div className={`flex shrink-0 items-center border-b border-[#c6c6c6] pr-[6px] pl-[5px] ${active ? "h-6 border-t bg-[#cddbf5]" : "h-[23px] bg-[#dcdcdc]"}`}>
        <h2 className="mr-auto text-[11px] font-bold">{children}</h2>
        <button aria-label="Maximieren" className="mr-3 size-2 border border-[#55555b]" />
        <button aria-label="Anheften" className="mr-[13px]"><Svg w={8} h={9}><path d="M1 .5h6M2.500.5v4M5.500.5v4M0 4.500h8M4 5v4" stroke="#55555b" /></Svg></button>
        <button aria-label="Schließen"><Cross /></button>
    </div>
)

const FieldList = () => (
    <section>
        <PanelTitle>Liste der Felder</PanelTitle>
        <div className="flex h-[19px] items-center border-b border-[#c6c6c6] bg-white pr-px">
            <input aria-label="Felder suchen" placeholder="Suchtext eingeben..." className="flex-1 pl-[3px] outline-none placeholder:text-[#767676]" />
            <Magnifier />
        </div>
        <div className="flex bg-white">
            <ul className="flex-1 pb-px">
                {tree.map(([depth, name, state, kind], i) => (
                    <li key={i} className="flex h-5 items-center" style={{ paddingLeft: depth * 18 }}>
                        <button aria-label={name + " umschalten"} className="flex h-5 w-[18px] items-center justify-center">{state && <Chevron open={state === "open"} />}</button>
                        <span className={`flex h-5 flex-1 items-center gap-[5px] pl-[2px] ${kind === "dark" ? "bg-[#d2d2d2]" : ""}`}>
                            {kind === "field"
                                ? <span className="h-[14px] w-4 border border-t-[3px] border-[#6d6d75] border-t-[#f3963e] text-center text-[9px] leading-[9px] text-[#4a88c7]">ab</span>
                                : <TableIcon blue={kind === "blue"} dark={kind === "dark"} />}
                            {name}
                        </span>
                    </li>
                ))}
            </ul>
            <div className="flex w-4 flex-col bg-[#f0f0f0] pt-px pb-px pl-px">
                <ScrollArrow />
                <div className="h-12 w-[15px] border border-[#a0a0a0] bg-white" />
                <span className="flex-1" />
                <ScrollArrow down />
            </div>
        </div>
        <div className="flex h-[27px] items-start border-t border-[#c6c6c6] bg-[#dcdcdc] pl-[3px]">
            <button className="flex h-[23px] w-[116px] items-center gap-1 border-b border-l border-[#c6c6c6] bg-[#f0f0f0] pl-2">
                <Svg w={14} h={13}><path d="M5 0h5v4H5zM0 9h4v4H0zM10 9h4v4h-4z" fill={ORANGE} /><path d="M7.500 4v3M2.500 9V6.500h9V9" stroke={GREY} /></Svg>
                Berichts Explorer
            </button>
            <button className="-mt-px flex h-[25px] w-[110px] items-center gap-[3px] border-x border-b border-[#c6c6c6] bg-[#f0f0f0] pl-[9px]">
                <Svg w={15} h={14}><path d="M0 2c0-3 11-3 11 0v8c0 3-11 3-11 0z" fill={ORANGE} /><path d="M0 4.500c3 2 8 2 11 0M0 8c3 2 8 2 11 0" stroke="#f0f0f0" /><path d="M6 7h9v7H6z" fill="#f0f0f0" /><path d="M7.500 8.500h7v2h-7zM7.500 11.500h7v2h-7z" stroke={GREY} /></Svg>
                Liste der Felder
            </button>
        </div>
    </section>
)

const properties = [
    { label: "Action", select: "(Keine)" },
    { label: "Anker horizontal", select: "Keine" },
    { label: "Automatische Breite", check: false },
    { label: "Drehung", text: "0" },
    { label: "Interaktive Sortierung", text: "(Sortieroptionen)", expand: true },
    { label: "Kann publizieren", check: true },
    { label: "Kann Schrumpfen", check: false },
    { label: "Kann Wachsen", check: true },
    { label: "Leere Werte verarbeit...", select: "Belassen" },
    { label: "Markierungstext zulassen", check: false },
    { label: "Mehrzeilig", check: true, changed: true },
    { label: "Optionen bearbeiten", text: "(Text bearbeiten Optionen)", expand: true },
    { label: "Prozess dupliziert Mod...", select: "Verlassen" },
    { label: "Prozess dupliziert Ziel", select: "Wert" },
    { label: "Sichtbar", check: true, active: true },
    { label: "Skripte", text: "(Textskripte)", expand: true },
    { label: "Textgröße Modus", select: "Keine" },
    { label: "Vertikal verankern", select: "Keiner" },
    { label: "Zeilenumbruch", check: true },
]

const PropertyRow = ({ p, id }) => (
    <div className="flex h-6 items-center">
        <span className="flex w-6 shrink-0 justify-center pl-1">{p.expand && <Chevron color="#6d6d75" />}</span>
        {p.check !== undefined ? (
            <span className="flex flex-1 items-center gap-[6px]">
                <span className="relative flex size-[14px]">
                    <input id={id} type="checkbox" defaultChecked={p.check} className={`size-[14px] appearance-none border border-[#a0a0a0] ${p.active ? "bg-[#dbe6fa]" : "bg-white"}`} />
                    {p.check && <Svg w={14} h={14} className="pointer-events-none absolute inset-0"><path d="M4 7l2.500 2.500L11 4.500" stroke="#6d6d75" strokeWidth="1.500" /></Svg>}
                </span>
                <label htmlFor={id}>{p.label}</label>
            </span>
        ) : (
            <>
                <label htmlFor={id} className="w-[117px] shrink-0 whitespace-nowrap">{p.label}</label>
                {p.select
                    ? (
                        <span className="relative flex h-5 flex-1 items-center">
                            <select id={id} defaultValue={p.select} className="h-5 w-full appearance-none border border-[#a0a0a0] bg-white pl-[3px]"><option>{p.select}</option></select>
                            <span className="pointer-events-none absolute right-1"><Caret /></span>
                        </span>
                    )
                    : <input id={id} defaultValue={p.text} className="h-5 min-w-0 flex-1 border border-[#a0a0a0] bg-white pl-[3px]" />}
            </>
        )}
        <span className="flex w-[51px] shrink-0 items-center pl-[13px]">
            <button aria-label={p.label + " Optionen"} className={`size-[6px] border ${p.changed ? "border-[#4a6fa5] bg-[#9db4d8]" : "border-[#a0a0a0]"}`} />
            {p.active && <span className="ml-[14px] font-['Liberation_Serif',serif] text-[15px] leading-none font-bold text-[#97979b] italic">ƒ</span>}
        </span>
    </div>
)

const propertyTabs = [
    ["Darstellung", <Svg w={20} h={20}><path d="M0 19c1-5 3-8 6-8l3 3c-1 3-4 5-9 5z" fill={ORANGE} /><path d="M8 10l3-3 3 3-3 3z" fill={GREY} /><path d="M12 6l4-5h2l2 2v2l-5 4z" fill={RED} /></Svg>],
    ["Verhalten", <Svg w={20} h={20}><circle cx="5.500" cy="14" r="3" stroke={BLUE} strokeWidth="2.200" /><circle cx="5.500" cy="14" r="4.700" stroke={BLUE} strokeWidth="1.600" strokeDasharray="2 1.700" /><circle cx="14.500" cy="5.500" r="3" stroke={BLUE} strokeWidth="2.200" /><circle cx="14.500" cy="5.500" r="4.700" stroke={BLUE} strokeWidth="1.600" strokeDasharray="2 1.700" /></Svg>],
    ["Daten", <Svg w={20} h={20}><path d="M3 4c0-4 14-4 14 0v12c0 4-14 4-14 0z" fill={ORANGE} /><path d="M3 6c3 2.500 11 2.500 14 0M3 11c3 2.500 11 2.500 14 0" stroke="#f0f0f0" strokeWidth="1.400" /></Svg>],
    ["Entwurf", <Svg w={20} h={20}><path d="M1 6c0 4 4 6 7 4l9 9 2-2-9-9c1-4-1-7-5-7l2 4-3 3z" fill={GREY} /></Svg>],
    ["Favoriten", <Svg w={20} h={20}><path d="M10 0l2.500 7H20l-6 4.500 2.300 7.500L10 14.500 3.700 19 6 11.500 0 7h7.500z" fill={BLUE} /></Svg>],
]

const Properties = () => (
    <section className="flex flex-1 flex-col">
        <PanelTitle active>Eigenschaften</PanelTitle>
        <span className="relative mt-[9px] mr-[10px] ml-[11px] flex items-center">
            <select aria-label="Element" className="h-[22px] w-full appearance-none border border-[#a0a0a0] bg-white pl-[3px] font-bold"><option>{"label81\u00a0\u00a0\u00a0Text"}</option></select>
            <span className="pointer-events-none absolute right-1"><Caret /></span>
        </span>
        <div className="relative flex h-[43px] items-end border-b border-[#c6c6c6] pr-[3px] pb-[5px] pl-1">
            {propertyTabs.map(([name, icon]) => (
                <button key={name} aria-label={name} className="flex h-5 w-9 items-center justify-center">{icon}</button>
            ))}
            <Svg w={13} h={7} className="absolute -bottom-px left-[52px]"><path d="M0 7l6.500-6.500L13 7z" fill="#f0f0f0" /><path d="M0 6.500h.5l6-6 6 6h.5" stroke="#c6c6c6" /></Svg>
            <span className="relative flex h-5 flex-1 items-center">
                <input aria-label="Eigenschaften suchen" placeholder="Suchtext eingeben..." className="h-5 w-full border border-[#a0a0a0] bg-white pl-[3px] placeholder:text-[#767676]" />
                <span className="absolute right-[2px]"><Magnifier /></span>
            </span>
        </div>
        <div className="border-b border-[#c6c6c6] pt-[10px] pb-1">
            {properties.map((p, i) => <PropertyRow key={i} p={p} id={"prop-" + i} />)}
        </div>
        <h3 className="mt-[17px] px-[7px] leading-4 font-bold">Sichtbar</h3>
        <p className="mt-[6px] px-[7px] font-['Liberation_Sans',sans-serif] leading-[13px]">Gets or sets a value that specifies whether the report control is displayed in the document.</p>
        <div className="mt-auto flex h-[26px] items-start border-t border-[#c6c6c6] bg-[#dcdcdc] pl-[3px]">
            <button className="-mt-px flex h-[25px] w-[104px] items-center gap-[3px] border-x border-b border-[#c6c6c6] bg-[#f0f0f0] pl-2">
                <Svg w={15} h={14}><path d="M0 0h12v3H0z" fill={BLUE} /><path d="M0 4h3v2H0zM4 4h8v2H4zM0 7h3v2H0zM4 7h4v2H4zM0 10h3v2H0zM4 10h3v2H4z" fill="#a5a5aa" /><circle cx="11" cy="10" r="2.500" stroke={BLUE} strokeWidth="2.200" /></Svg>
                Eigenschaften
            </button>
            <button className="flex h-[23px] w-[103px] items-center gap-1 border-r border-b border-[#c6c6c6] bg-[#f0f0f0] pl-2">
                <Svg w={14} h={15}><path d="M2 12.500H.5V.5h11V2" stroke={GREY} /><path d="M2.500 2.500h11v12h-11z" stroke={GREY} /><path d="M4 10h2v3H4z" fill={ORANGE} /><path d="M7 8h2v5H7z" fill={BLUE} /><path d="M10 5h2v8h-2z" fill={RED} /></Svg>
                Berichtsgalerie
            </button>
        </div>
    </section>
)

const App = () => (
    <div className="relative flex h-screen flex-col overflow-hidden bg-[#f0f0f0] pb-6 font-['DejaVu_Sans_Condensed','DejaVu_Sans',sans-serif] text-[11px] leading-[14px] text-[#2b2b2b]">
        <TopBars />
        <div className="flex min-h-0 flex-1 border-t border-[#c6c6c6]">
            <Toolbox />
            <Center />
            <aside className="flex w-[374px] shrink-0 flex-col border-l border-[#c6c6c6]">
                <FieldList />
                <Properties />
            </aside>
        </div>
        <Svg w={294} h={82} className="pointer-events-none absolute top-[1059px] right-[352px]">
            <path d="M1 78L274 12" stroke="#ea1d1d" strokeWidth="5" />
            <path d="M271 2l22 5-16 14z" fill="#ea1d1d" />
        </Svg>
    </div>
)

export default App
